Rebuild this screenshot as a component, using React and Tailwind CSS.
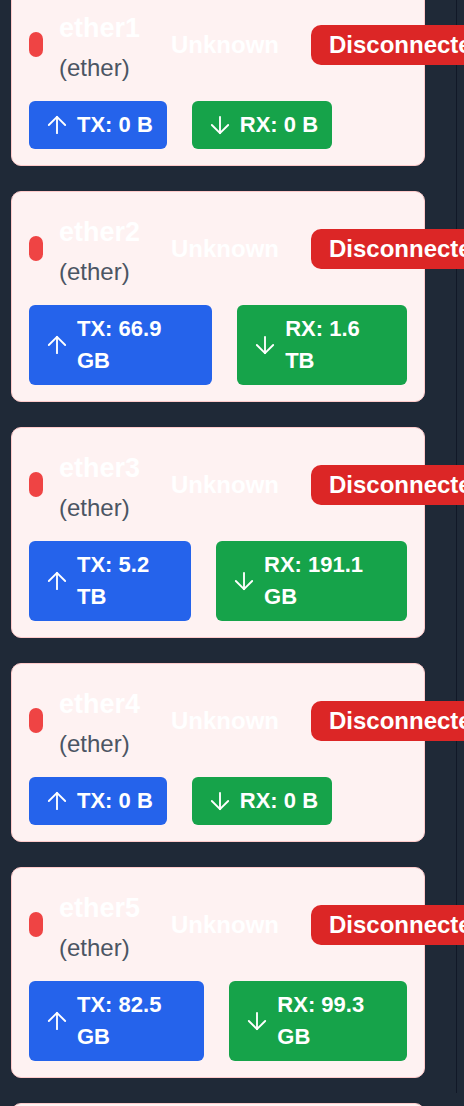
import React from 'react';
import { ArrowUp, ArrowDown } from 'lucide-react';

const ports = [
  { name: 'ether1', type: 'ether', tx: '0 B', rx: '0 B' },
  { name: 'ether2', type: 'ether', tx: '66.9 GB', rx: '1.6 TB' },
  { name: 'ether3', type: 'ether', tx: '5.2 TB', rx: '191.1 GB' },
  { name: 'ether4', type: 'ether', tx: '0 B', rx: '0 B' },
  { name: 'ether5', type: 'ether', tx: '82.5 GB', rx: '99.3 GB' },
  { name: 'ether6', type: 'ether', tx: '0 B', rx: '0 B' },
];

const PortCard = ({ port }) => (
  <div className="bg-[#fef2f2] border border-[#fecaca] rounded-[10px] px-[17px] py-4">
    {/* header */}
    <div className="flex items-center min-h-[81px] mb-4">
      <span className="w-3.5 h-[25px] rounded-full bg-[#ef4444] shrink-0"></span>
      <div className="ml-4 w-[112px] shrink-0 pt-1">
        <div className="text-[27px] leading-8 font-bold text-white">{port.name}</div>
        <div className="mt-2.5 text-[24px] leading-7 text-[#4b5563]">({port.type})</div>
      </div>
      <span className="w-[140px] shrink-0 text-[24px] leading-8 font-bold text-white">Unknown</span>
      <span className="shrink-0 whitespace-nowrap bg-[#dc2626] text-white text-[24px] leading-8 font-bold px-[18px] py-1 rounded-[10px]">
        Disconnected
      </span>
    </div>

    {/* traffic */}
    <div className="flex gap-[25px]">
      <div className="flex items-center gap-1.5 bg-[#2563eb] text-white rounded-md px-3.5 py-2">
        <ArrowUp size={28} strokeWidth={1.6} className="shrink-0" />
        <span className="text-[22px] leading-8 font-semibold">TX: {port.tx}</span>
      </div>
      <div className="flex items-center gap-1.5 bg-[#16a34a] text-white rounded-md px-3.5 py-2">
        <ArrowDown size={28} strokeWidth={1.6} className="shrink-0" />
        <span className="text-[22px] leading-8 font-semibold">RX: {port.rx}</span>
      </div>
    </div>
  </div>
);

export default function App() {
  return (
    <div
      className="w-[464px] h-[1106px] overflow-hidden bg-[#1f2937]"
      style={{ fontFamily: '"Liberation Sans", Arial, sans-serif' }}
    >
      <div className="w-[457px] h-full border-r border-[#111827] pl-[11px] pr-[31px]">
        <div className="-mt-[13px] flex flex-col gap-[25px]">
          {ports.map((p) => (
            <PortCard key={p.name} port={p} />
          ))}
        </div>
      </div>
    </div>
  );
}
